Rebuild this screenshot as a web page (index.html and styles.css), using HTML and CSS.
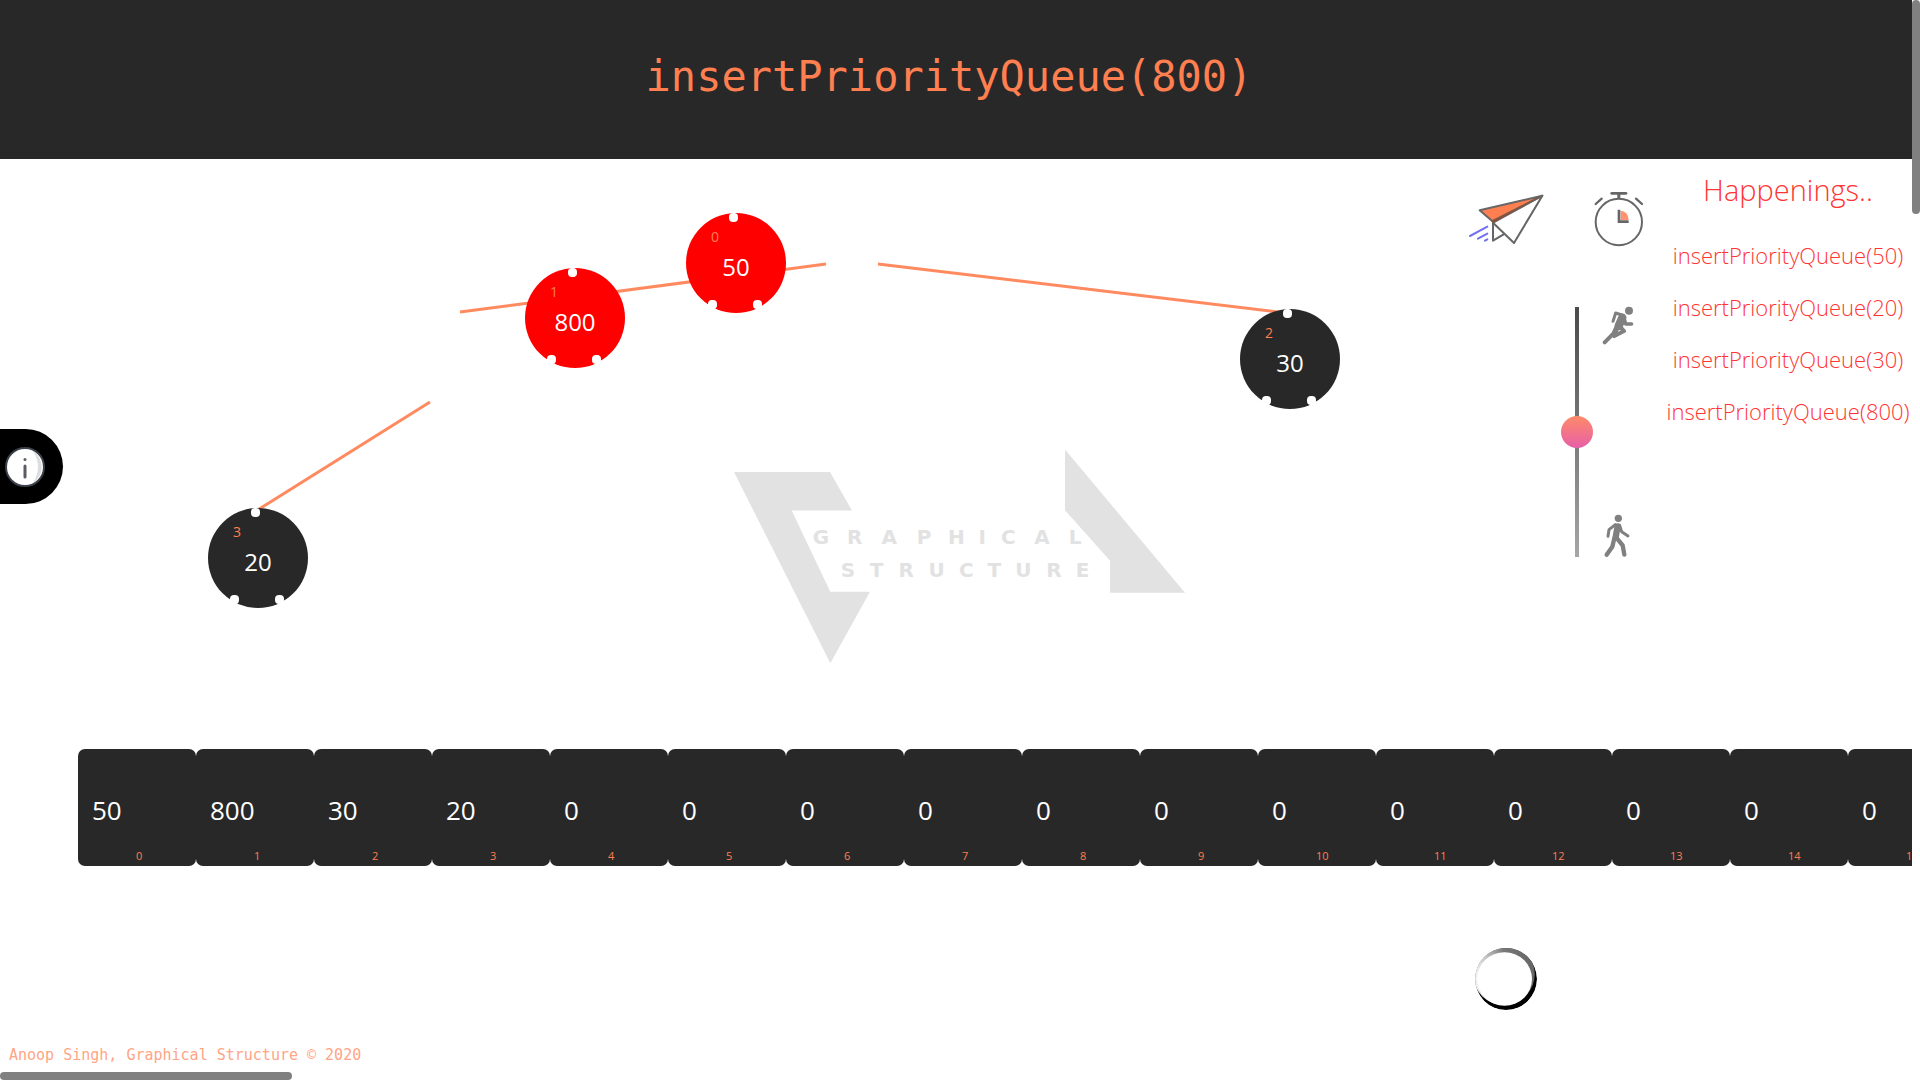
FILE: index.html
```html
<!DOCTYPE html>
<html lang="en">
<head>
<meta charset="utf-8">
<title>Graphical Structure</title>
<link rel="stylesheet" href="styles.css">
</head>
<body>
<div class="page">
  <header class="banner"><h1 class="banner-title">insertPriorityQueue(800)</h1></header>

  <main class="stage">
    <section class="canvas" aria-label="Heap tree">
      <svg class="logo" viewBox="0 0 480 230" aria-label="Graphical Structure">
        <path d="M14 32H110L132 70.600H71.700L110.300 151.800H150L110.300 223.300ZM345 9.500L465 152.700H390V120.700L345 70.300Z"/>
        <text y="104" x="101 134.700 169.300 204 236.300 262.300 288.300 322 355">GRAPHICAL</text>
        <text y="137" x="128 156.700 186.300 216.700 246.300 274.300 303.300 334 362.700">STRUCTURE</text>
      </svg>
      <svg class="edges">
        <path d="M826 105L460 153M878 105L1286 154M430 243L256 352"/>
      </svg>
      <div class="node active node-0"><i></i><i></i><i></i><small>0</small><b>50</b></div>
      <div class="node active node-1"><i></i><i></i><i></i><small>1</small><b>800</b></div>
      <div class="node node-2"><i></i><i></i><i></i><small>2</small><b>30</b></div>
      <div class="node node-3"><i></i><i></i><i></i><small>3</small><b>20</b></div>
      <button class="info" type="button" aria-label="Information">
        <svg viewBox="0 0 42 42" width="42" height="42">
          <circle cx="21" cy="21" r="19" fill="#fff" stroke="#3b4049" stroke-width="2"/>
          <path d="M29 5A19 19 0 0 1 29 37Q39 21 29 5Z" fill="#ddd"/>
          <circle cx="21" cy="13.500" r="1.500" fill="#5a5c64"/>
          <path d="M21 20V31" stroke="#5a5c64" stroke-width="3" stroke-linecap="round"/>
        </svg>
      </button>
    </section>

    <section class="tools">
      <div class="tool-buttons">
        <button class="icon-button" type="button" aria-label="Send">
          <svg viewBox="80 95 240 165" width="80" height="55" fill="none" stroke="#666" stroke-width="6" stroke-linejoin="round">
            <path d="M158 187V241L190 222M158 187L221 248L306 106Z"/>
            <path d="M118 150L306 106L158 184Z" fill="#ff7f50"/>
            <path d="M155 181L158 188L300 108Z" fill="#8a5038" stroke="#7d5a4a" stroke-width="3"/>
            <path d="M89 227L141 199M113 235L141 220M134 241L141 237" stroke="#7272f0" stroke-linecap="round"/>
          </svg>
        </button>
        <button class="icon-button" type="button" aria-label="Timer">
          <svg viewBox="455 90 162 174" width="54" height="58" fill="none" stroke="#666" stroke-width="6">
            <circle cx="535.500" cy="186" r="69.500"/>
            <path d="M514 100H557" stroke-width="8" stroke-linecap="round"/>
            <path d="M535.500 100V116" stroke-width="9"/>
            <path d="M466 132L484 116M587 116L605 132" stroke-width="7" stroke-linecap="round"/>
            <path d="M541 152A25 27 0 0 1 565 180H541Z" fill="#ff9270" stroke="none"/>
            <path d="M536 149V185H565" stroke-width="8"/>
          </svg>
        </button>
      </div>
      <div class="speed">
        <input class="speed-range" type="range" min="0" max="100" value="50" aria-label="Animation speed">
        <div class="speed-icons">
          <svg viewBox="188 45 105 120" width="35" height="40" fill="none" stroke="#808080" stroke-linecap="round" stroke-linejoin="round">
            <circle cx="269" cy="62" r="12" fill="#808080" stroke="none"/>
            <path d="M221 94L229 69L248 75" stroke-width="9"/>
            <path d="M249 83L238 108" stroke-width="25"/>
            <path d="M256 90L259 102H277" stroke-width="10"/>
            <path d="M244 112L254 123L225 138L232 119M231 112L222 131L196 157" stroke-width="12"/>
          </svg>
          <svg viewBox="188 670 96 138" width="32" height="46" fill="none" stroke="#808080" stroke-linecap="round" stroke-linejoin="round">
            <circle cx="237" cy="686" r="11" fill="#808080" stroke="none"/>
            <path d="M206 740L209 720L228 705" stroke-width="9"/>
            <path d="M241 707L247 726L266 739" stroke-width="9"/>
            <path d="M235 710L229 742" stroke-width="19"/>
            <path d="M225 746L219 771L202 795M233 746L250 767L255 795" stroke-width="13"/>
          </svg>
        </div>
      </div>
    </section>

    <aside class="happenings">
      <h2 class="happenings-title">Happenings..</h2>
      <ul class="happenings-list">
        <li>insertPriorityQueue(50)</li>
        <li>insertPriorityQueue(20)</li>
        <li>insertPriorityQueue(30)</li>
        <li>insertPriorityQueue(800)</li>
      </ul>
    </aside>
  </main>

  <ol class="array">
    <li><b>50</b><small>0</small></li>
    <li><b>800</b><small>1</small></li>
    <li><b>30</b><small>2</small></li>
    <li><b>20</b><small>3</small></li>
    <li><b>0</b><small>4</small></li>
    <li><b>0</b><small>5</small></li>
    <li><b>0</b><small>6</small></li>
    <li><b>0</b><small>7</small></li>
    <li><b>0</b><small>8</small></li>
    <li><b>0</b><small>9</small></li>
    <li><b>0</b><small>10</small></li>
    <li><b>0</b><small>11</small></li>
    <li><b>0</b><small>12</small></li>
    <li><b>0</b><small>13</small></li>
    <li><b>0</b><small>14</small></li>
    <li><b>0</b><small>15</small></li>
  </ol>

  <footer class="footer">
    <svg class="spinner" viewBox="-32 -32 64 64" width="64" height="64" role="img" aria-label="Working">
      <defs>
        <clipPath id="disc"><circle r="31"/></clipPath>
        <linearGradient id="fade"><stop offset="0" stop-color="#fff"/><stop offset=".5" stop-color="#777"/><stop offset="1" stop-color="#666"/></linearGradient>
      </defs>
      <g clip-path="url(#disc)">
        <circle r="31"/>
        <circle cx="-2.200" cy="-5" r="31" fill="url(#fade)"/>
        <ellipse cx="-1.500" cy="0" rx="27.500" ry="26.800" fill="#fff"/>
      </g>
    </svg>
    <p class="copyright">Anoop Singh, Graphical Structure © 2020</p>
  </footer>
</div>
<div class="bar-y"></div>
<div class="bar-x"></div>
</body>
</html>
```
FILE: styles.css
```css
* { box-sizing: border-box; }

body {
  margin: 0;
  min-height: 100vh;
  display: grid;
  grid-template-columns: minmax(0, 1fr) 8px;
  grid-template-rows: 1fr 8px;
  background: #fff;
  font-family: "Open Sans", "Noto Sans", sans-serif;
}

h1, h2, p, ul, ol { margin: 0; padding: 0; font-weight: 400; }
ul, ol { list-style: none; }
b { font-weight: 400; }
svg { display: block; }

button {
  padding: 0;
  border: 0;
  background: none;
  cursor: pointer;
}

.page { display: flex; flex-direction: column; }

.banner {
  display: flex;
  align-items: center;
  justify-content: center;
  height: 159px;
  padding: 0 14px 6px 0;
  background: #282828;
}

.banner-title {
  color: #ff7f50;
  font: 42px/56px "DejaVu Sans Mono", monospace;
}

.stage { display: flex; min-height: 590px; }

.canvas { position: relative; flex: 1; }

.edges {
  position: absolute;
  inset: 0;
  width: 100%;
  height: 100%;
  fill: none;
  stroke: #ff8a60;
  stroke-width: 3;
}

.logo {
  position: absolute;
  left: 720px;
  top: 281px;
  width: 480px;
  height: 230px;
  fill: #e2e2e2;
  font: bold 20px "DejaVu Sans", sans-serif;
  text-anchor: middle;
}

.node {
  position: absolute;
  width: 100px;
  height: 100px;
  border-radius: 50%;
  background: #282828;
  color: #fff;
}

.node.active { background: #f00; }

.node-0 { left: 686px; top: 54px; }
.node-1 { left: 525px; top: 109px; }
.node-2 { left: 1240px; top: 150px; }
.node-3 { left: 208px; top: 349px; }

.node i {
  position: absolute;
  left: 43px;
  top: 0;
  width: 9px;
  height: 9px;
  border-radius: 4px;
  background: #fff;
}

.node i:nth-of-type(2) { left: 22px; top: 87px; }
.node i:nth-of-type(3) { left: 67px; top: 87px; }

.node small {
  position: absolute;
  left: 25px;
  top: 14px;
  color: #ff7f50;
  font-size: 14px;
  line-height: 20px;
}

.node b {
  display: block;
  padding-top: 37px;
  font-size: 24px;
  line-height: 34px;
  text-align: center;
}

.info {
  position: absolute;
  left: 0;
  top: 270px;
  width: 63px;
  height: 75px;
  padding-left: 4px;
  border-radius: 0 38px 38px 0;
  background: #000;
}

.tools {
  display: flex;
  flex-direction: column;
  gap: 57px;
  width: 216px;
  padding-top: 31px;
}

.tool-buttons {
  display: flex;
  align-items: center;
  gap: 45px;
  padding-left: 19px;
}

.speed {
  display: flex;
  align-items: center;
  gap: 9px;
  padding-left: 113px;
}

.speed-range {
  appearance: none;
  writing-mode: vertical-lr;
  direction: rtl;
  width: 32px;
  height: 250px;
  margin: 0;
  background: linear-gradient(#4a4a4a, #a6a6a6) center / 4px 100% no-repeat;
}

.speed-range::-webkit-slider-thumb {
  appearance: none;
  width: 32px;
  height: 32px;
  border-radius: 50%;
  background: linear-gradient(#ff8a68, #e65fa8);
}

.speed-icons {
  display: flex;
  flex-direction: column;
  justify-content: space-between;
  height: 254px;
}

.happenings {
  width: 248px;
  padding-top: 11px;
  color: #ff3434;
  text-align: center;
  white-space: nowrap;
}

.happenings-title {
  font-size: 29px;
  font-weight: 300;
  line-height: 40px;
}

.happenings-list {
  display: grid;
  gap: 20px;
  padding-top: 29px;
  font-size: 22px;
  font-weight: 300;
  line-height: 32px;
}

.array {
  display: flex;
  padding-left: 78px;
  overflow: hidden;
}

.array li {
  flex: none;
  display: flex;
  flex-direction: column;
  justify-content: flex-end;
  gap: 20px;
  width: 118px;
  height: 117px;
  padding: 0 0 2px 14px;
  border-radius: 7px;
  background: #282828;
  color: #fff;
}

.array b { font-size: 26px; line-height: 36px; }

.array small {
  padding-left: 44px;
  color: #ff7f50;
  font-size: 11px;
  line-height: 16px;
}

.footer {
  flex: 1;
  display: flex;
  flex-direction: column;
  justify-content: space-between;
  padding: 81px 0 6px 9px;
}

.spinner { align-self: flex-end; margin-right: 374px; }

.copyright {
  color: #ffa585;
  font: 15px/22px "DejaVu Sans Mono", monospace;
}

.bar-y {
  height: 214px;
  border-radius: 4px;
  background: #808080;
}

.bar-x {
  width: 292px;
  border-radius: 4px;
  background: #808080;
}
```
